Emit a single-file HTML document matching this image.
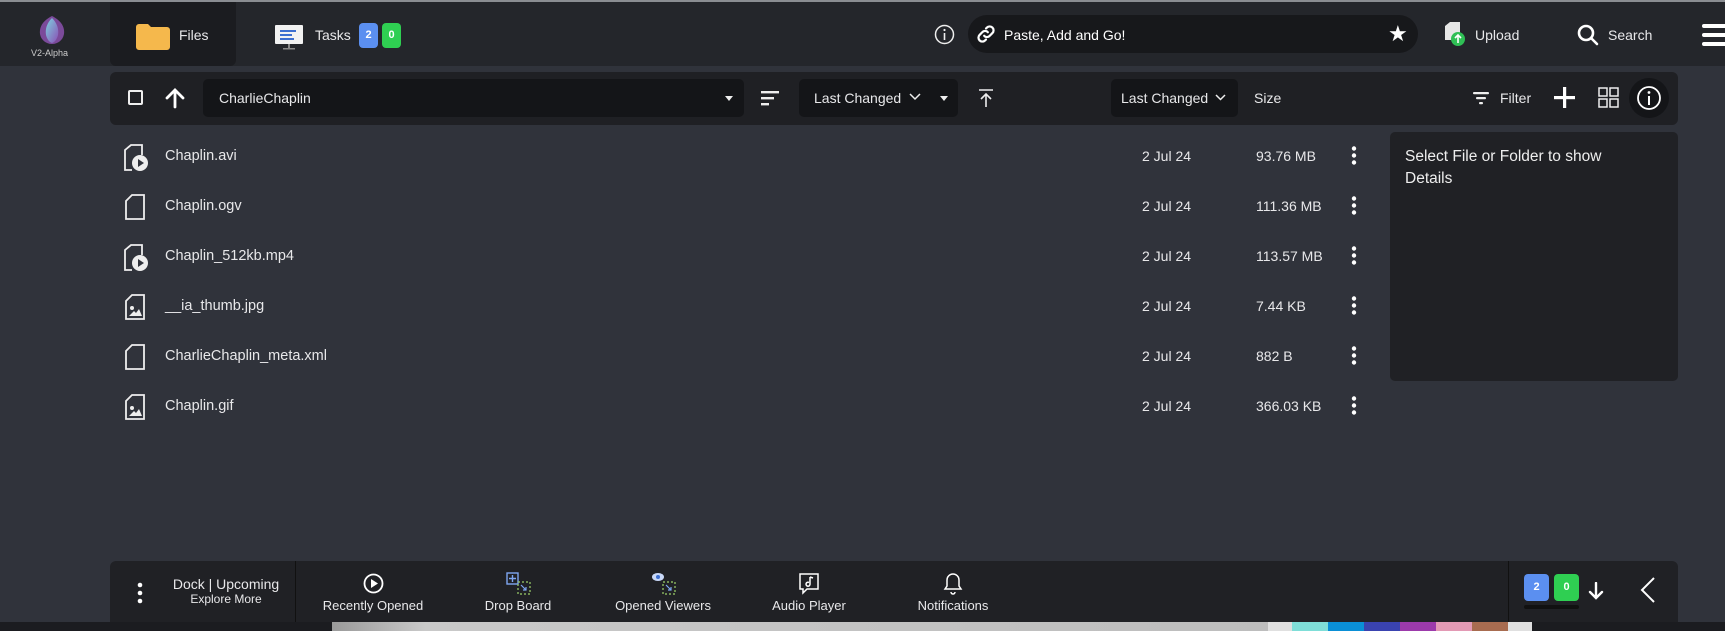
<!DOCTYPE html>
<html><head><meta charset="utf-8"><style>
*{box-sizing:border-box;margin:0;padding:0}
body{width:1725px;height:631px;overflow:hidden;background:#30333b;font-family:"Liberation Sans",sans-serif;color:#e8e8ea;position:relative;font-size:14px}
.a{position:absolute}
.top{left:0;top:0;width:1725px;height:66px;background:#24262b;border-top:2px solid #8a8d92}
.t{white-space:nowrap}
.badge{position:absolute;width:19px;height:25px;border-radius:4px;color:#fff;font-size:11px;font-weight:bold;text-align:center;line-height:25px}
.row{position:absolute;left:110px;width:1270px;height:50px}
.row .n{position:absolute;left:55px;top:16px;font-size:14.5px}
.row .d{position:absolute;left:1032px;top:16px}
.row .s{position:absolute;left:1146px;top:16px}
.row svg{position:absolute}
</style></head><body>
<div class="a top">
 <svg class="a" style="left:35px;top:12px" width="34" height="32" viewBox="0 0 34 32"><defs><linearGradient id="g" x1="0" y1="0" x2="1" y2="1"><stop offset="0" stop-color="#7dd4e0"/><stop offset="1" stop-color="#8a4fb5"/></linearGradient></defs><path d="M17 2C9 6 4 12 5 20c1 6 6 10 12 10s11-4 12-10C30 12 25 6 17 2z" fill="#7b4a9a"/><path d="M17 4c-5 5-7 11-6 17 1 4 3 7 6 8 3-1 5-4 6-8 1-6-1-12-6-17z" fill="url(#g)"/></svg>
 <div class="a t" style="left:31px;top:46px;font-size:9px;color:#ccc">V2-Alpha</div>
 <div class="a" style="left:110px;top:0;width:126px;height:64px;background:#1b1c20;border-radius:0 0 6px 6px"></div>
 <svg class="a" style="left:136px;top:22px" width="34" height="26" viewBox="0 0 34 26"><path d="M0 3a3 3 0 013-3h9l3 3h16a3 3 0 013 3v17a3 3 0 01-3 3H3a3 3 0 01-3-3z" fill="#f5b84c"/></svg>
 <div class="a t" style="left:179px;top:25px">Files</div>
 <svg class="a" style="left:274px;top:22px" width="30" height="26" viewBox="0 0 30 26"><rect x="1" y="1" width="28" height="19" fill="#f2f2f2" rx="1"/><rect x="6" y="6" width="16" height="2" fill="#3d6fd0"/><rect x="6" y="10" width="12" height="2" fill="#3d6fd0"/><rect x="6" y="14" width="14" height="2" fill="#3d6fd0"/><rect x="14" y="20" width="2" height="4" fill="#888"/><rect x="9" y="24" width="12" height="1.5" fill="#888"/></svg>
 <div class="a t" style="left:315px;top:25px">Tasks</div>
 <div class="badge" style="left:359px;top:21px;background:#5b8ff0">2</div>
 <div class="badge" style="left:382px;top:21px;background:#2fcf52">0</div>
 <svg class="a" style="left:934px;top:22px" width="21" height="21" viewBox="0 0 21 21"><circle cx="10.5" cy="10.5" r="9" fill="none" stroke="#eee" stroke-width="1.5"/><rect x="9.7" y="9" width="1.6" height="7" fill="#eee"/><circle cx="10.5" cy="6" r="1.1" fill="#eee"/></svg>
 <div class="a" style="left:968px;top:13px;width:450px;height:38px;background:#17181b;border-radius:19px"></div>
 <svg class="a" style="left:975px;top:21px" width="22" height="22" viewBox="0 0 24 24" fill="none" stroke="#fff" stroke-width="2.4" stroke-linecap="round"><path d="M10 14a4 4 0 006 0l3-3a4 4 0 00-6-6l-1 1"/><path d="M14 10a4 4 0 00-6 0l-3 3a4 4 0 006 6l1-1"/></svg>
 <div class="a t" style="left:1004px;top:25px;color:#fff">Paste, Add and Go!</div>
 <div class="a t" style="left:1388px;top:19px;font-size:22px;color:#fff">★</div>
 <svg class="a" style="left:1443px;top:20px" width="24" height="26" viewBox="0 0 24 26"><path d="M2 4l5-4h10v18H2z" fill="#e6e6e6"/><circle cx="15" cy="17" r="7" fill="#2fbf55"/><path d="M15 21v-7M12 16l3-3 3 3" stroke="#fff" stroke-width="1.6" fill="none"/></svg>
 <div class="a t" style="left:1475px;top:25px">Upload</div>
 <svg class="a" style="left:1576px;top:21px" width="24" height="24" viewBox="0 0 24 24" fill="none" stroke="#fff" stroke-width="2.6"><circle cx="10" cy="10" r="7"/><path d="M15 15l6 6" stroke-linecap="round"/></svg>
 <div class="a t" style="left:1608px;top:25px">Search</div>
 <div class="a" style="left:1702px;top:22px;width:30px;height:4px;background:#fff;border-radius:2px"></div>
 <div class="a" style="left:1702px;top:31px;width:30px;height:4px;background:#fff;border-radius:2px"></div>
 <div class="a" style="left:1702px;top:40px;width:30px;height:4px;background:#fff;border-radius:2px"></div>
</div>

<div class="a" style="left:110px;top:72px;width:1568px;height:53px;background:#1f2024;border-radius:6px"></div>
<div class="a" style="left:128px;top:90px;width:15px;height:15px;border:2px solid #eee;border-radius:2px"></div>
<svg class="a" style="left:164px;top:87px" width="22" height="22" viewBox="0 0 22 22" fill="none" stroke="#fff" stroke-width="2.8" stroke-linecap="round"><path d="M11 20V3M3 11l8-8 8 8"/></svg>
<div class="a" style="left:203px;top:79px;width:541px;height:38px;background:#141518;border-radius:5px"></div>
<div class="a t" style="left:219px;top:90px">CharlieChaplin</div>
<div class="a" style="left:725px;top:96px;border:4px solid transparent;border-top:5px solid #eee"></div>
<svg class="a" style="left:761px;top:89px" width="20" height="18" viewBox="0 0 20 18" fill="#eee"><rect x="0" y="2" width="18" height="2.4"/><rect x="0" y="8" width="13" height="2.4"/><rect x="0" y="14" width="8" height="2.4"/></svg>
<div class="a" style="left:799px;top:79px;width:159px;height:38px;background:#141518;border-radius:5px"></div>
<div class="a t" style="left:814px;top:90px">Last Changed</div>
<svg class="a" style="left:909px;top:93px" width="12" height="8" viewBox="0 0 12 8" fill="none" stroke="#eee" stroke-width="1.5"><path d="M1 1l5 5 5-5"/></svg>
<div class="a" style="left:940px;top:96px;border:4px solid transparent;border-top:5px solid #eee"></div>
<svg class="a" style="left:978px;top:88px" width="16" height="20" viewBox="0 0 16 20" fill="none" stroke="#eee" stroke-width="1.6"><path d="M1 2h14M8 19V6M3 11l5-5 5 5"/></svg>
<div class="a" style="left:1111px;top:79px;width:127px;height:38px;background:#141518;border-radius:5px"></div>
<div class="a t" style="left:1121px;top:90px">Last Changed</div>
<svg class="a" style="left:1215px;top:94px" width="11" height="7" viewBox="0 0 11 7" fill="none" stroke="#eee" stroke-width="1.5"><path d="M1 1l4.5 4.5L10 1"/></svg>
<div class="a t" style="left:1254px;top:90px">Size</div>
<svg class="a" style="left:1473px;top:90px" width="16" height="16" viewBox="0 0 16 16" fill="#eee"><rect x="0" y="2" width="16" height="2.2" rx="1"/><rect x="3" y="7" width="10" height="2.2" rx="1"/><rect x="6" y="12" width="4" height="2.2" rx="1"/></svg>
<div class="a t" style="left:1500px;top:90px">Filter</div>
<svg class="a" style="left:1554px;top:87px" width="21" height="21" viewBox="0 0 21 21" fill="#fff"><rect x="9" y="0" width="3.2" height="21"/><rect x="0" y="9" width="21" height="3.2"/></svg>
<svg class="a" style="left:1598px;top:87px" width="21" height="21" viewBox="0 0 21 21" fill="none" stroke="#eee" stroke-width="1.5"><rect x="1" y="1" width="8" height="8"/><rect x="12" y="1" width="8" height="8"/><rect x="1" y="12" width="8" height="8"/><rect x="12" y="12" width="8" height="8"/></svg>
<div class="a" style="left:1629px;top:78px;width:40px;height:40px;border-radius:50%;background:#141518"></div>
<svg class="a" style="left:1636px;top:85px" width="26" height="26" viewBox="0 0 26 26"><circle cx="13" cy="13" r="11" fill="none" stroke="#fff" stroke-width="1.8"/><rect x="12" y="11" width="2" height="9" fill="#fff"/><circle cx="13" cy="7.5" r="1.4" fill="#fff"/></svg>

<div class="a" style="left:1390px;top:132px;width:288px;height:249px;background:#202125;border-radius:5px"></div>
<div class="a" style="left:1405px;top:146px;width:225px;font-size:15.5px;line-height:22px;color:#eee">Select File or Folder to show Details</div>

<!-- rows -->
<div class="row" style="top:132px">
<svg style="left:12px;top:11px" width="28" height="30" viewBox="0 0 28 30" fill="none" stroke="#eee" stroke-width="1.8"><path d="M10 27H3V7l6-5h11v10"/><circle cx="18" cy="20" r="8" fill="#eee" stroke="none"/><path d="M16 16v8l6-4z" fill="#30333b" stroke="none"/></svg>
<div class="n">Chaplin.avi</div><div class="d">2 Jul 24</div><div class="s">93.76 MB</div></div>
<div class="row" style="top:182px">
<svg style="left:14px;top:11px" width="22" height="28" viewBox="0 0 22 28" fill="none" stroke="#eee" stroke-width="1.8"><path d="M2 26V8l6-6h12v24z"/></svg>
<div class="n">Chaplin.ogv</div><div class="d">2 Jul 24</div><div class="s">111.36 MB</div></div>
<div class="row" style="top:232px">
<svg style="left:12px;top:11px" width="28" height="30" viewBox="0 0 28 30" fill="none" stroke="#eee" stroke-width="1.8"><path d="M10 27H3V7l6-5h11v10"/><circle cx="18" cy="20" r="8" fill="#eee" stroke="none"/><path d="M16 16v8l6-4z" fill="#30333b" stroke="none"/></svg>
<div class="n">Chaplin_512kb.mp4</div><div class="d">2 Jul 24</div><div class="s">113.57 MB</div></div>
<div class="row" style="top:282px">
<svg style="left:14px;top:11px" width="22" height="28" viewBox="0 0 22 28" fill="none" stroke="#eee" stroke-width="1.8"><path d="M2 26V8l6-6h12v24z"/><circle cx="8" cy="15" r="2" fill="#eee" stroke="none"/><path d="M5 23l5-5 2 2 3-4 3 7z" fill="#eee" stroke="none"/></svg>
<div class="n">__ia_thumb.jpg</div><div class="d">2 Jul 24</div><div class="s">7.44 KB</div></div>
<div class="row" style="top:332px">
<svg style="left:14px;top:11px" width="22" height="28" viewBox="0 0 22 28" fill="none" stroke="#eee" stroke-width="1.8"><path d="M2 26V8l6-6h12v24z"/></svg>
<div class="n">CharlieChaplin_meta.xml</div><div class="d">2 Jul 24</div><div class="s">882 B</div></div>
<div class="row" style="top:382px">
<svg style="left:14px;top:11px" width="22" height="28" viewBox="0 0 22 28" fill="none" stroke="#eee" stroke-width="1.8"><path d="M2 26V8l6-6h12v24z"/><circle cx="8" cy="15" r="2" fill="#eee" stroke="none"/><path d="M5 23l5-5 2 2 3-4 3 7z" fill="#eee" stroke="none"/></svg>
<div class="n">Chaplin.gif</div><div class="d">2 Jul 24</div><div class="s">366.03 KB</div></div>
<svg class="a" style="left:1350px;top:146px" width="8" height="280" viewBox="0 0 8 280" fill="#fff">
<g id="k"><circle cx="4" cy="2.5" r="2.2"/><circle cx="4" cy="9.5" r="2.2"/><circle cx="4" cy="16.5" r="2.2"/></g>
<use href="#k" y="50"/><use href="#k" y="100"/><use href="#k" y="150"/><use href="#k" y="200"/><use href="#k" y="250"/></svg>

<!-- dock -->
<div class="a" style="left:110px;top:561px;width:1568px;height:61px;background:#202125;border-radius:6px 6px 0 0"></div>
<svg class="a" style="left:136px;top:582px" width="8" height="22" viewBox="0 0 8 22" fill="#fff"><circle cx="4" cy="3" r="2.3"/><circle cx="4" cy="11" r="2.3"/><circle cx="4" cy="19" r="2.3"/></svg>
<div class="a t" style="left:166px;top:576px;width:120px;text-align:center;font-size:14px">Dock | Upcoming</div>
<div class="a t" style="left:166px;top:592px;width:120px;text-align:center;font-size:12px">Explore More</div>
<div class="a" style="left:295px;top:561px;width:1px;height:61px;background:#111"></div>
<svg class="a" style="left:363px;top:573px" width="21" height="21" viewBox="0 0 21 21"><circle cx="10.5" cy="10.5" r="9" fill="none" stroke="#fff" stroke-width="1.8"/><path d="M8 6v9l7-4.5z" fill="#fff"/></svg>
<div class="a t" style="left:303px;top:598px;width:140px;text-align:center;font-size:13px">Recently Opened</div>
<svg class="a" style="left:506px;top:572px" width="26" height="24" viewBox="0 0 26 24" fill="none"><rect x="1" y="1" width="11" height="11" stroke="#7ea6f0" stroke-width="1.4"/><path d="M6.5 3v7M3 6.5h7" stroke="#7ea6f0" stroke-width="1.4"/><rect x="12" y="10" width="12" height="12" stroke="#9bd06a" stroke-width="1.2" stroke-dasharray="2 2"/><path d="M15 13l5 5M20 15v3h-3" stroke="#7ea6f0" stroke-width="1.2"/></svg>
<div class="a t" style="left:448px;top:598px;width:140px;text-align:center;font-size:13px">Drop Board</div>
<svg class="a" style="left:651px;top:572px" width="26" height="24" viewBox="0 0 26 24" fill="none"><ellipse cx="7" cy="5" rx="6" ry="4" fill="#c8d8f8"/><circle cx="7" cy="5" r="2" fill="#3d6fd0"/><rect x="12" y="10" width="12" height="12" stroke="#9bd06a" stroke-width="1.2" stroke-dasharray="2 2"/><path d="M15 13l5 5M20 15v3h-3" stroke="#7ea6f0" stroke-width="1.2"/></svg>
<div class="a t" style="left:593px;top:598px;width:140px;text-align:center;font-size:13px">Opened Viewers</div>
<svg class="a" style="left:798px;top:572px" width="22" height="24" viewBox="0 0 22 24" fill="none" stroke="#fff" stroke-width="1.5"><path d="M2 2h18v15H9l-4 4v-4H2z"/><path d="M12 5v7a2 2 0 11-1-1.5M12 5l3 1"/></svg>
<div class="a t" style="left:739px;top:598px;width:140px;text-align:center;font-size:13px">Audio Player</div>
<svg class="a" style="left:943px;top:572px" width="20" height="24" viewBox="0 0 20 24" fill="none" stroke="#fff" stroke-width="1.5"><path d="M10 2a6 6 0 016 6v6l2 3H2l2-3V8a6 6 0 016-6z"/><path d="M8 20a2 2 0 004 0"/></svg>
<div class="a t" style="left:883px;top:598px;width:140px;text-align:center;font-size:13px">Notifications</div>
<div class="a" style="left:1508px;top:561px;width:1px;height:61px;background:#111"></div>
<div class="badge" style="left:1524px;top:574px;width:25px;height:27px;line-height:27px;background:#5b8ff0">2</div>
<div class="badge" style="left:1554px;top:574px;width:25px;height:27px;line-height:27px;background:#2fcf52">0</div>
<div class="a" style="left:1524px;top:605px;width:55px;height:4px;background:#111;border-radius:2px"></div>
<svg class="a" style="left:1588px;top:582px" width="16" height="18" viewBox="0 0 16 18" fill="none" stroke="#fff" stroke-width="2.4" stroke-linecap="round"><path d="M8 1v15M2 10l6 6 6-6"/></svg>
<svg class="a" style="left:1640px;top:577px" width="16" height="26" viewBox="0 0 16 26" fill="none" stroke="#fff" stroke-width="2"><path d="M14 1L2 13l12 12"/></svg>

<!-- bottom strip -->
<div class="a" style="left:0;top:622px;width:1725px;height:9px;background:#1b1c20"></div>
<div class="a" style="left:332px;top:622px;width:936px;height:9px;background:linear-gradient(90deg,#9a9a9a,#c9c9c9 10%,#bdbdbd)"></div>
<div class="a" style="left:1268px;top:622px;width:24px;height:9px;background:#e0e0e0"></div>
<div class="a" style="left:1292px;top:622px;width:36px;height:9px;background:#7fded8"></div>
<div class="a" style="left:1328px;top:622px;width:36px;height:9px;background:#0a8fd6"></div>
<div class="a" style="left:1364px;top:622px;width:36px;height:9px;background:#3a43b0"></div>
<div class="a" style="left:1400px;top:622px;width:36px;height:9px;background:#9c3aab"></div>
<div class="a" style="left:1436px;top:622px;width:36px;height:9px;background:#e39ab5"></div>
<div class="a" style="left:1472px;top:622px;width:36px;height:9px;background:#a86c50"></div>
<div class="a" style="left:1508px;top:622px;width:24px;height:9px;background:#e0e0e0"></div>
</body></html>
